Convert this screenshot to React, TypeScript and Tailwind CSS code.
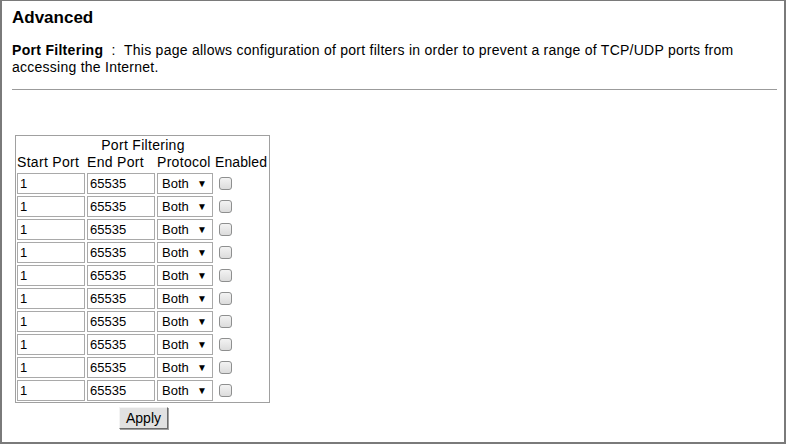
const rows = Array.from({ length: 10 }, () => ({ start: '1', end: '65535', protocol: 'Both' }));

function Checkbox() {
  return (
    <div className="ml-[4px] h-[13px] w-[13px] rounded-[3px] border border-[#8e8f8f] bg-gradient-to-b from-[#f3f3f3] to-[#dcdcdc]" />
  );
}

export default function App() {
  return (
    <div
      className="box-border h-[444px] w-[786px] border-2 border-t border-[#7a7a7a] bg-white pl-[10px] pr-[7px] text-black"
      style={{ fontFamily: '"Liberation Sans", Arial, sans-serif' }}
    >
      <h1 className="pt-[7px] text-[17px] font-bold leading-[20px]">Advanced</h1>

      <p className="mt-[14px] text-[14px] leading-[17px] tracking-[0.25px]">
        <span className="font-bold tracking-[0.3px]">Port Filtering</span>
        &nbsp;&nbsp;:&nbsp;&nbsp;This page allows configuration of port filters in order to prevent a range of
        TCP/UDP ports from accessing the Internet.
      </p>

      <hr className="mt-[13px] border-0 border-t border-[#9b9b9b]" />

      <div className="ml-[3px] mt-[45px] flex w-[255px] flex-col items-center">
        <div className="w-[255px] border border-[#a0a0a0] pb-[1px] pl-[1px] pt-[1px] text-[14px] tracking-[0.3px]">
          <div className="text-center leading-[17px]">Port Filtering</div>
          <div className="grid grid-cols-[68px_68px_56px_54px] gap-x-[2px] gap-y-[2px]">
            <div className="leading-[17px]">Start Port</div>
            <div className="leading-[17px]">End Port</div>
            <div className="leading-[17px]">Protocol</div>
            <div className="leading-[17px] tracking-[0.1px]">Enabled</div>
            {rows.map((r, i) => (
              <div key={i} className="contents">
                <div className="h-[21px] border border-[#a9a9a9] pl-[2px] text-[13px] leading-[19px] tracking-normal">{r.start}</div>
                <div className="h-[21px] border border-[#a9a9a9] pl-[2px] text-[13px] leading-[19px] tracking-normal">{r.end}</div>
                <div className="flex h-[21px] items-center justify-between border border-[#a9a9a9] pl-[4px] pr-[5px] text-[13px] tracking-normal">
                  <span>{r.protocol}</span>
                  <span className="text-[10px]">▼</span>
                </div>
                <div className="flex h-[21px] items-center">
                  <Checkbox />
                </div>
              </div>
            ))}
          </div>
        </div>
        <button className="ml-[2px] mt-[4px] h-[22px] w-[49px] border border-b-[#6b6b6b] border-l-[#f4f4f4] border-r-[#6b6b6b] border-t-[#f4f4f4] bg-[#e1e1e1] text-[14px] leading-[18px] shadow-[1px_1px_0_#a0a0a0]">
          Apply
        </button>
      </div>
    </div>
  );
}
